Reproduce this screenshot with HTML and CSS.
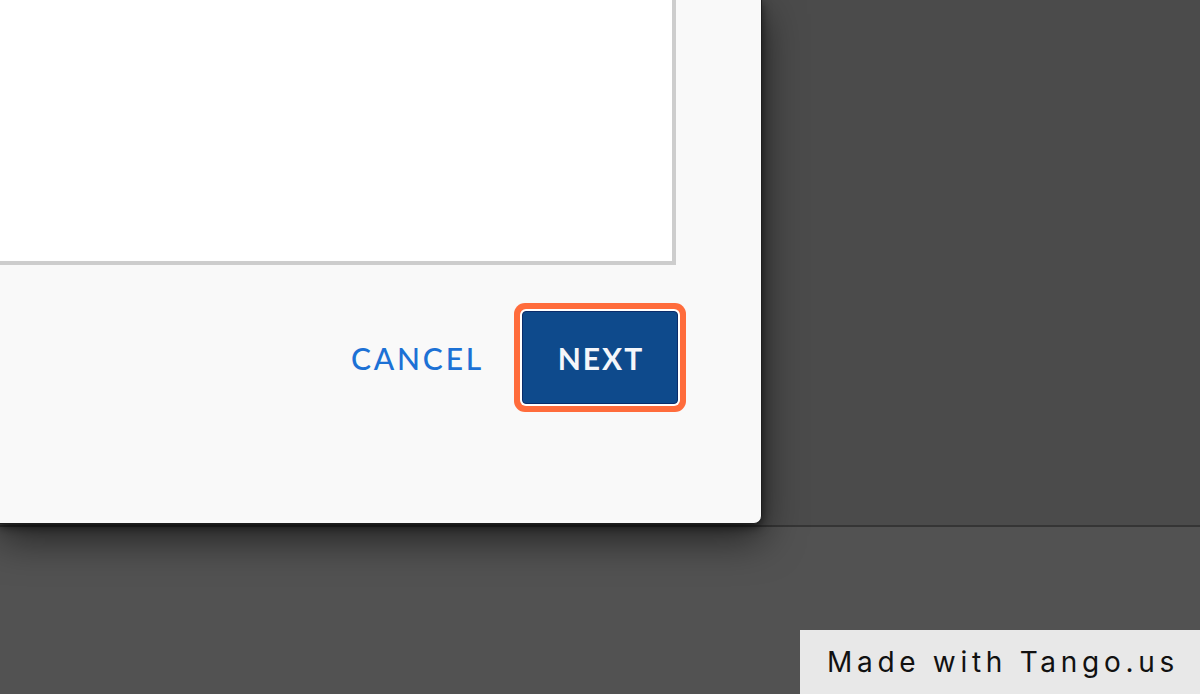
FILE: index.html
```html
<!DOCTYPE html>
<html>
<head>
<meta charset="utf-8">
<link rel="stylesheet" href="styles.css">
</head>
<body>
<div class="screen">
  <div class="top">
    <div class="dialog">
      <div class="content-box"></div>
      <div class="footer">
        <button class="btn-cancel">CANCEL</button>
        <button class="btn-next">NEXT</button>
      </div>
    </div>
  </div>
  <div class="bottom">
    <div class="watermark">Made with Tango.us</div>
  </div>
</div>
</body>
</html>
```

FILE: styles.css
```css
html, body {
  margin: 0;
  padding: 0;
  background: #525252;
}
.screen {
  width: 1200px;
  height: 694px;
  display: flex;
  flex-direction: column;
  overflow: hidden;
}
.top {
  height: 525px;
  background: #4b4b4b;
  border-bottom: 2px solid #353535;
  display: flex;
  align-items: flex-start;
  flex-shrink: 0;
}
.dialog {
  position: relative;
  z-index: 1;
  width: 761px;
  height: 523px;
  background: #f9f9f9;
  border-right: 1px solid #1e1e1e;
  border-bottom: 1px solid #1e1e1e;
  border-bottom-right-radius: 8px;
  box-shadow: 0 14px 40px rgba(0, 0, 0, 0.6), 0 3px 10px rgba(0, 0, 0, 0.55);
  display: flex;
  flex-direction: column;
}
.content-box {
  width: 672px;
  height: 261px;
  background: #ffffff;
  border-right: 4px solid #cdcdcd;
  border-bottom: 4px solid #cdcdcd;
}
.footer {
  display: flex;
  justify-content: flex-end;
  align-items: center;
  padding-top: 46px;
  padding-right: 83px;
  gap: 38px;
}
.btn-cancel {
  background: none;
  border: none;
  padding: 0;
  font-family: "Lato", "Open Sans", sans-serif;
  font-weight: 500;
  font-size: 30px;
  letter-spacing: 2.8px;
  color: #1c71d5;
}
.btn-next {
  width: 156px;
  height: 93px;
  background: #0e4a8c;
  border: 1px solid #0a2c6a;
  border-radius: 4px;
  box-shadow: 0 0 0 2px #ffffff, 0 0 0 8px #ff6c3c;
  color: #f4f6fa;
  font-family: "Lato", "Open Sans", sans-serif;
  font-weight: 700;
  font-size: 30px;
  letter-spacing: 2px;
  padding: 0 0 0 2px;
}
.bottom {
  flex: 1;
  display: flex;
  justify-content: flex-end;
  align-items: flex-end;
}
.watermark {
  width: 400px;
  height: 64px;
  background: #e8e8e8;
  color: #111111;
  font-family: "Inter", "DejaVu Sans", sans-serif;
  font-size: 28px;
  letter-spacing: 4.7px;
  display: flex;
  align-items: center;
  padding-left: 27px;
  box-sizing: border-box;
  white-space: nowrap;
}
```
